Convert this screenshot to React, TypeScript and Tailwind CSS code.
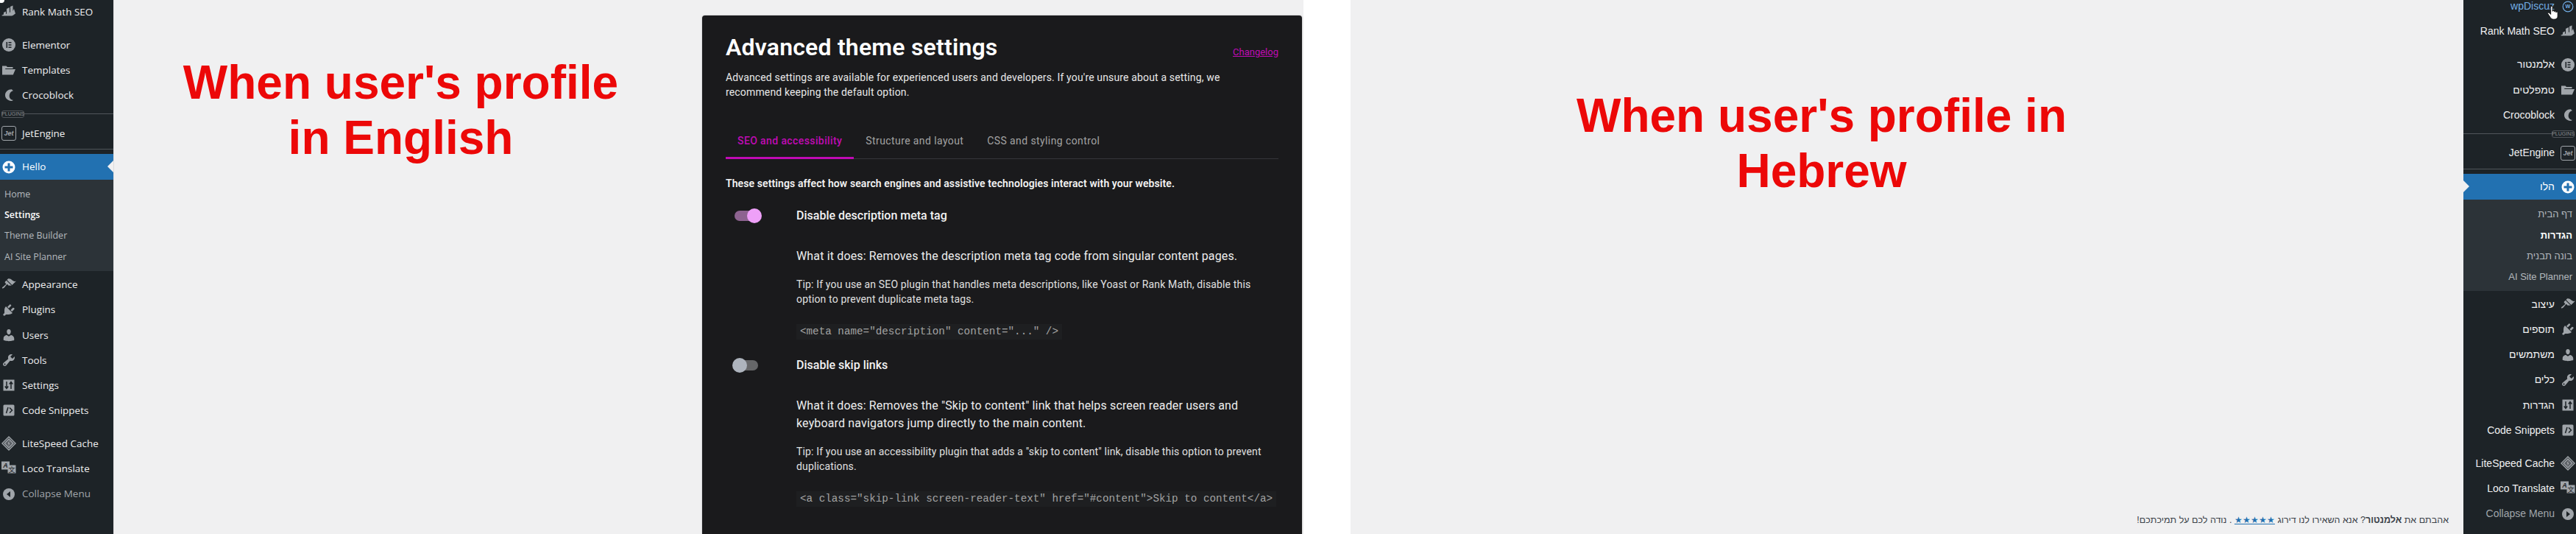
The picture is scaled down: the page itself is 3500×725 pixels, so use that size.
import type { ReactNode } from 'react'

// Dashicon style menu icons, all on a 20x20 grid
const Glyph = ({ d }: { d: string }) => (
  <svg viewBox="0 0 20 20" className="w-[20px] h-[20px] fill-[#a0a5aa]">
    <path d={d} />
  </svg>
)

const icons: Record<string, ReactNode> = {
  rank: (
    <svg viewBox="0 0 20 20" className="w-[20px] h-[20px] fill-[#a0a5aa]">
      <path d="M0 15l3-1.5V11l3-1.5V13l1-.5V6l4-2v7l1-.5V3l3.5-1.5V9l1.500-3 2 6.500c-1 .5-3 2.500-5 3H3.500C2 15.500 1 15.500 0 15z" />
    </svg>
  ),
  elementor: (
    <svg viewBox="0 0 20 20" className="w-[20px] h-[20px]">
      <circle cx="10" cy="10" r="9" className="fill-[#a0a5aa]" />
      <path d="M6.500 6h1.600v8H6.500zM9.500 6h4v1.600h-4zM9.500 9.200h4v1.600h-4zM9.500 12.400h4V14h-4z" className="fill-[#1d2327]" />
    </svg>
  ),
  folder: <Glyph d="M1 16.500V4.500h5.500l1.500 1.500h7.500v2H5.500L2.500 14l2.300-5H19l-3.200 7.500z" />,
  croco: <Glyph d="M13.800 2.200C9 2.200 5 5.600 5 10.200c0 4.500 4 7.800 9.500 7.800l1.500-1.300c-2.800.4-5.300-2.500-5.300-5.300 0-4 2.400-6.700 5.300-7.200z" />,
  jet: (
    <svg viewBox="0 0 20 20" className="w-[20px] h-[20px]">
      <rect x="0.500" y="0.500" width="19" height="19" rx="2.500" className="fill-none stroke-[#a0a5aa]" />
      <text x="10" y="13" textAnchor="middle" fontSize="9" fontWeight="700" fontStyle="italic" fontFamily="Liberation Sans" className="fill-[#a0a5aa]">Jet</text>
    </svg>
  ),
  hello: (
    <svg viewBox="0 0 20 20" className="w-[20px] h-[20px]">
      <circle cx="10" cy="10" r="8.500" className="fill-white" />
      <path d="M8.500 4.500h3v4h4v3h-4v4h-3v-4h-4v-3h4z" className="fill-[#2271b1]" />
    </svg>
  ),
  appearance: <Glyph d="M14.48 11.06L7.41 3.99l1.5-1.5c.5-.56 2.3-.47 3.51.32 1.21.8 1.43 1.28 2.91 2.1 1.18.64 2.45 1.26 4.45.85zm-.71.71L6.7 4.7 4.93 6.47c-.39.39-.39 1.02 0 1.41l1.06 1.06c.39.39.39 1.03 0 1.42-.6.6-1.43 1.11-2.21 1.69-.35.26-.7.53-1.01.84C1.43 13.23.4 14.79 1.01 15.4c.61.61 2.17-.42 3.51-1.76.31-.31.58-.66.85-1.02.57-.78 1.08-1.61 1.69-2.21.39-.39 1.02-.39 1.41 0l1.06 1.06c.39.39 1.02.39 1.41 0z" />,
  plugins: <Glyph d="M13.11 4.36L9.87 7.6 8 5.73l3.24-3.24c.35-.34 1.05-.2 1.56.32.52.51.66 1.21.31 1.55zm-8 1.77l.91-1.12 9.01 9.01-1.19.84c-.71.71-2.63 1.16-3.82 1.16H6.14L4.9 17.26c-.59.59-1.54.59-2.12 0-.59-.58-.59-1.53 0-2.12l1.24-1.24v-3.88c0-1.13.4-3.19 1.09-3.89zm7.26 3.97l3.24-3.24c.34-.35 1.04-.21 1.55.31.52.51.66 1.21.31 1.55l-3.24 3.25z" />,
  users: <Glyph d="M10 9.25c-2.27 0-2.73-3.44-2.73-3.44C7 4.02 7.82 2 9.97 2c2.16 0 2.98 2.02 2.71 3.81 0 0-.41 3.44-2.68 3.44zm0 2.57L12.72 10c2.39 0 4.52 2.33 4.52 4.53v2.49s-3.65 1.13-7.24 1.13c-3.65 0-7.24-1.13-7.24-1.13v-2.49c0-2.25 1.94-4.48 4.47-4.48z" />,
  tools: <Glyph d="M16.68 9.77c-1.34 1.34-3.3 1.67-4.95.99l-5.41 6.52c-.99.99-2.59.99-3.58 0s-.99-2.59 0-3.57l6.52-5.42c-.68-1.65-.35-3.61.99-4.95 1.28-1.28 3.12-1.62 4.72-1.06l-2.89 2.89 2.82 2.82 2.86-2.87c.53 1.58.18 3.39-1.08 4.65zM3.81 16.21c.4.39 1.04.39 1.43 0 .4-.4.4-1.04 0-1.43-.39-.4-1.03-.4-1.43 0-.39.39-.39 1.03 0 1.43z" />,
  settings: (
    <svg viewBox="0 0 20 20" className="w-[20px] h-[20px]">
      <rect x="2.500" y="2.500" width="15" height="15" className="fill-[#a0a5aa]" />
      <path d="M7 5v9M4.800 11.500L7 14.500l2.200-3M13 15V6M10.800 8.500L13 5.500l2.200 3" className="fill-none stroke-[#1d2327] stroke-[1.500]" />
    </svg>
  ),
  code: (
    <svg viewBox="0 0 20 20" className="w-[20px] h-[20px]">
      <rect x="2.500" y="2.500" width="15" height="15" rx="1.500" className="fill-[#a0a5aa]" />
      <path d="M9 6l-2.500 8M11 6.500l3.500 3.500-3.500 3.500" className="fill-none stroke-[#1d2327] stroke-[1.500]" />
    </svg>
  ),
  litespeed: (
    <svg viewBox="0 0 20 20" className="w-[20px] h-[20px]">
      <path d="M10 0l10 10-10 10L0 10z" className="fill-[#a0a5aa]" />
      <path d="M10 2.500L17.500 10 10 17.500 2.500 10z" className="fill-none stroke-[#1d2327]" />
      <path d="M10 5l5 5-5 5-5-5z" className="fill-[#5c6166]" />
      <path d="M10.800 6.500L8.600 10.300h1.500l-.9 3.200 2.200-3.800H9.900z" className="fill-[#c3c4c7]" />
    </svg>
  ),
  loco: (
    <svg viewBox="0 0 20 20" className="w-[20px] h-[20px]">
      <rect x="0" y="0.500" width="11" height="11" className="fill-[#a0a5aa]" />
      <text x="5.500" y="9" textAnchor="middle" fontSize="9" fontWeight="700" fontStyle="italic" fontFamily="Liberation Sans" className="fill-[#1d2327]">A</text>
      <rect x="8.500" y="5.500" width="11" height="11" className="fill-[#a0a5aa]" />
      <text x="14" y="14.500" textAnchor="middle" fontSize="9" fontFamily="Noto Sans CJK SC" className="fill-[#1d2327]">文</text>
    </svg>
  ),
}

const CollapseIcon = ({ rtl }: { rtl: boolean }) => (
  <svg viewBox="0 0 20 20" className="w-[20px] h-[20px]">
    <circle cx="10" cy="10" r="8" className="fill-[#a0a5aa]" />
    <path d={rtl ? 'M8 6l5 4-5 4z' : 'M12 6l-5 4 5 4z'} className="fill-[#1d2327]" />
  </svg>
)

type Labels = {
  rank: string
  elementor: string
  templates: string
  hello: string
  subs: string[]
  appearance: string
  plugins: string
  users: string
  tools: string
  settings: string
}

const english: Labels = {
  rank: 'Rank Math SEO',
  elementor: 'Elementor',
  templates: 'Templates',
  hello: 'Hello',
  subs: ['Home', 'Settings', 'Theme Builder', 'AI Site Planner'],
  appearance: 'Appearance',
  plugins: 'Plugins',
  users: 'Users',
  tools: 'Tools',
  settings: 'Settings',
}

const hebrew: Labels = {
  rank: 'Rank Math SEO',
  elementor: 'אלמנטור',
  templates: 'טמפלטים',
  hello: 'הלו',
  subs: ['דף הבית', 'הגדרות', 'בונה תבנית', 'AI Site Planner'],
  appearance: 'עיצוב',
  plugins: 'תוספים',
  users: 'משתמשים',
  tools: 'כלים',
  settings: 'הגדרות',
}

function Row({ icon, label, rtl, muted }: { icon: ReactNode; label: string; rtl: boolean; muted?: boolean }) {
  return (
    <div className="flex items-center h-[34.2px]">
      <span className={rtl ? 'flex justify-center w-[22px] shrink-0 ml-[7px]' : 'flex justify-center w-[24px] shrink-0 mr-[6px]'}>{icon}</span>
      <span className={muted ? 'text-[#a0a5aa] whitespace-nowrap' : 'text-[#f0f0f1] whitespace-nowrap'}>{label}</span>
    </div>
  )
}

function AdminMenu({ labels, rtl }: { labels: Labels; rtl: boolean }) {
  return (
    <nav
      dir={rtl ? 'rtl' : 'ltr'}
      className={
        rtl
          ? "relative w-[153px] shrink-0 h-[725px] overflow-hidden bg-[#1d2327] text-[14px] font-['Liberation_Sans',sans-serif]"
          : "relative w-[154px] shrink-0 h-[725px] overflow-hidden bg-[#1d2327] text-[13.5px] font-['Open_Sans',sans-serif]"
      }
    >
      {rtl ? (
        <div className="flex items-center h-[34.2px] mt-[-8.3px]">
          <span className="flex justify-center w-[22px] shrink-0 ml-[7px]">
            <svg viewBox="0 0 20 20" className="w-[16px] h-[16px]">
              <circle cx="10" cy="10" r="8.500" className="fill-none stroke-[#72aee6] stroke-[1.500]" />
              <text x="10" y="13" textAnchor="middle" fontSize="9" fontWeight="700" fontFamily="Liberation Sans" className="fill-[#72aee6]">W</text>
            </svg>
          </span>
          <span className="text-[#72aee6] whitespace-nowrap">wpDiscuz</span>
        </div>
      ) : (
        <div className="h-0 mt-[-1.1px]" />
      )}
      <Row icon={icons.rank} label={labels.rank} rtl={rtl} />
      <div className="h-[10.8px]" />
      <Row icon={icons.elementor} label={labels.elementor} rtl={rtl} />
      <Row icon={icons.folder} label={labels.templates} rtl={rtl} />
      <Row icon={icons.croco} label="Crocoblock" rtl={rtl} />
      <div className={rtl ? 'flex items-center h-[17.4px] pb-[1px] pr-[2px]' : 'flex items-center h-[17.4px] pb-[1px] pl-[2px]'}>
        <span className="border border-[#50555a] rounded-[3px] h-[10px] w-[31px] shrink-0 flex items-center justify-center text-[7px] leading-none text-[#8c8f94] font-['Liberation_Sans',sans-serif]">
          PLUGINS
        </span>
        <div className="flex-1 h-px bg-[#50555a]" />
      </div>
      <Row icon={icons.jet} label="JetEngine" rtl={rtl} />
      <div className="h-px bg-[#50555a] mt-[4px] mb-[6px]" />

      <div className="relative flex items-center h-[35px] bg-[#2271b1]">
        <span className={rtl ? 'flex justify-center w-[22px] shrink-0 ml-[7px]' : 'flex justify-center w-[24px] shrink-0 mr-[6px]'}>{icons.hello}</span>
        <span className="text-white">{labels.hello}</span>
        <span
          className={
            rtl
              ? 'absolute left-0 top-[9px] border-y-[8px] border-y-transparent border-l-[8px] border-l-[#f0f0f1]'
              : 'absolute right-0 top-[9px] border-y-[8px] border-y-transparent border-r-[8px] border-r-[#f0f0f1]'
          }
        />
      </div>
      <div
        className={
          rtl
            ? "bg-[#2c3338] pt-[6px] pb-[5px] pr-[5px] text-[13px] font-['Liberation_Sans',sans-serif]"
            : "bg-[#2c3338] pt-[6px] pb-[5px] pl-[6px] text-[12.5px] font-['Open_Sans',sans-serif]"
        }
      >
        {labels.subs.map((s, i) => (
          <div key={s} className={i === 1 ? 'h-[28.3px] flex items-center text-white font-semibold' : 'h-[28.3px] flex items-center text-[#b4b9be]'}>
            {s}
          </div>
        ))}
      </div>
      <div className="h-px" />
      <Row icon={icons.appearance} label={labels.appearance} rtl={rtl} />
      <Row icon={icons.plugins} label={labels.plugins} rtl={rtl} />
      <Row icon={icons.users} label={labels.users} rtl={rtl} />
      <Row icon={icons.tools} label={labels.tools} rtl={rtl} />
      <Row icon={icons.settings} label={labels.settings} rtl={rtl} />
      <Row icon={icons.code} label="Code Snippets" rtl={rtl} />
      <div className="h-[10.8px]" />
      <Row icon={icons.litespeed} label="LiteSpeed Cache" rtl={rtl} />
      <Row icon={icons.loco} label="Loco Translate" rtl={rtl} />
      <Row icon={<CollapseIcon rtl={rtl} />} label="Collapse Menu" rtl={rtl} muted />

      {rtl ? (
        <svg viewBox="0 0 24 24" className="absolute left-[112px] top-[5px] w-[20px] h-[24px] fill-white stroke-black">
          <path d="M8 3a1.500 1.500 0 0 1 3 0v7a1.400 1.400 0 0 1 2.800 0v1a1.400 1.400 0 0 1 2.800 0v1a1.400 1.400 0 0 1 2.800 0v6c0 3-2 5-5 5h-2c-2.500 0-3.500-1-5-3l-4-6c-.8-1.200 1-2.600 2.200-1.400L8 15z" />
        </svg>
      ) : (
        <span className="absolute left-[-2px] top-[-4px] w-[8px] h-[8px] rounded-full bg-white" />
      )}
    </nav>
  )
}

function Toggle({ on }: { on: boolean }) {
  return (
    <div className={on ? 'relative w-[32px] h-[14px] ml-[12px] rounded-full bg-[#8d6390]' : 'relative w-[32px] h-[14px] ml-[12px] rounded-full bg-[#666769]'}>
      <span
        className={
          on
            ? 'absolute left-[17px] top-[-3px] w-[20px] h-[20px] rounded-full bg-[#eea0f8]'
            : 'absolute left-[-3px] top-[-3px] w-[20px] h-[20px] rounded-full bg-[#aeb4bd]'
        }
      />
    </div>
  )
}

function Setting({ on, title, what, tip, code }: { on: boolean; title: string; what: string; tip: string; code: string }) {
  return (
    <>
      <div className="flex items-center h-[24px]">
        <div className="w-[96px] shrink-0">
          <Toggle on={on} />
        </div>
        <div className="text-[16px] leading-[24px] font-medium text-[#f2f2f2]">{title}</div>
      </div>
      <div className="pl-[96px]">
        <p className="mt-[31px] text-[16px] leading-[24px] tracking-[0.15px] text-[#ededed]">{what}</p>
        <p className="mt-[16px] text-[14px] leading-[20px] tracking-[0.15px] text-[#e0e0e0]">{tip}</p>
        <code className="block w-fit mt-[24px] h-[21px] px-[5px] bg-[#1e1f21] text-[14.27px] leading-[21px] text-[#a3a3a3] font-['Liberation_Mono',monospace] whitespace-pre">
          {code}
        </code>
      </div>
    </>
  )
}

function SettingsCard() {
  return (
    <div className="w-[815px] h-[704px] mt-[21px] shrink-0 overflow-hidden rounded-t-[4px] bg-[#1a1a1c] px-[32px] pt-[23px] shadow-[0_0_2px_rgba(0,0,0,0.3)] font-[Roboto,sans-serif]">
      <div className="flex items-end justify-between">
        <h1 className="text-[32px] leading-[40px] tracking-[0.2px] font-semibold text-white">Advanced theme settings</h1>
        <a className="mb-[3px] text-[13px] leading-[20px] text-[#c00ab4] underline">Changelog</a>
      </div>
      <p className="mt-[11px] text-[14px] leading-[20px] tracking-[0.15px] text-[#e8e8e8]">
        Advanced settings are available for experienced users and developers. If you're unsure about a setting, we recommend keeping the default option.
      </p>
      <div className="flex mt-[35px] border-b border-[#35353a] text-[14px] leading-[20px] tracking-[0.4px] h-[46px]">
        <div className="h-[46px] px-[16px] pt-[11px] border-b-[3px] border-[#c00ab4] text-[#c00ab4] font-medium">SEO and accessibility</div>
        <div className="px-[16px] pt-[11px] text-[#a3a3a3]">Structure and layout</div>
        <div className="px-[16px] pt-[11px] text-[#a3a3a3]">CSS and styling control</div>
      </div>
      <p className="mt-[23px] text-[14px] leading-[20px] tracking-[0.1px] font-semibold text-[#f2f2f2]">
        These settings affect how search engines and assistive technologies interact with your website.
      </p>
      <div className="h-[22px]" />
      <Setting
        on
        title="Disable description meta tag"
        what="What it does: Removes the description meta tag code from singular content pages."
        tip="Tip: If you use an SEO plugin that handles meta descriptions, like Yoast or Rank Math, disable this option to prevent duplicate meta tags."
        code={'<meta name="description" content="..." />'}
      />
      <div className="h-[23px]" />
      <Setting
        on={false}
        title="Disable skip links"
        what={'What it does: Removes the "Skip to content" link that helps screen reader users and keyboard navigators jump directly to the main content.'}
        tip={'Tip: If you use an accessibility plugin that adds a "skip to content" link, disable this option to prevent duplications.'}
        code={'<a class="skip-link screen-reader-text" href="#content">Skip to content</a>'}
      />
    </div>
  )
}

export default function App() {
  return (
    <div className="flex w-[3500px] h-[725px] overflow-hidden bg-white font-['Liberation_Sans',sans-serif]">
      {/* English profile */}
      <div className="flex w-[1771px] shrink-0">
        <AdminMenu labels={english} rtl={false} />
        <div className="flex flex-1 border-l border-[#dcdcde] bg-[#f0f0f1]">
          <div className="w-[799px] shrink-0 pr-[20px] pt-[75px] text-center text-[64px] leading-[75px] font-bold text-[#ec0808]">
            When user's profile
            <br />
            in English
          </div>
          <SettingsCard />
        </div>
      </div>

      <div className="w-[64px] shrink-0" />

      {/* Hebrew profile */}
      <div className="flex flex-1">
        <div className="flex flex-col flex-1 bg-[#f0f0f1]">
          <div className="w-[1280px] pt-[120px] text-center text-[64px] leading-[75px] font-bold text-[#ec0808]">
            When user's profile in
            <br />
            Hebrew
          </div>
          <p dir="rtl" className="mt-auto pb-[9px] pr-[20px] text-[12.5px] leading-[20px] text-[#3c434a]">
            אהבתם את <b>אלמנטור</b>? אנא השאירו לנו דירוג{' '}
            <a className="text-[11.5px] text-[#2271b1] underline">★★★★★</a> . נודה לכם על תמיכתכם!
          </p>
        </div>
        <AdminMenu labels={hebrew} rtl />
      </div>
    </div>
  )
}
